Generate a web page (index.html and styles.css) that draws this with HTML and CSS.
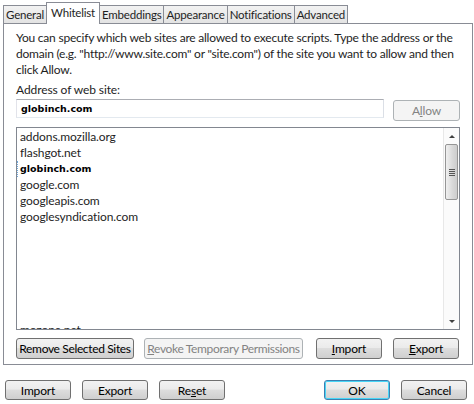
FILE: index.html
```html
<!DOCTYPE html>
<html lang="en">
<head>
  <meta charset="UTF-8">
  <title>Options - Whitelist</title>
  <link rel="stylesheet" href="styles.css">
</head>
<body>

  <div class="tabs">
    <div class="tab first">General</div>
    <div class="tab active">Whitelist</div>
    <div class="tab">Embeddings</div>
    <div class="tab">Appearance</div>
    <div class="tab">Notifications</div>
    <div class="tab">Advanced</div>
  </div>

  <div class="panel">
    <p class="intro">You can specify which web sites are allowed to execute scripts. Type the address or the domain (e.g. "http://www.site.com" or "site.com") of the site you want to allow and then click Allow.</p>

    <div class="label">Address of web site:</div>
    <div class="address-row">
      <div class="address">globinch.com</div>
      <button class="btn allow" disabled>A<u>l</u>low</button>
    </div>

    <!-- site list -->
    <div class="sites">
      <div class="site-items">
        <div class="site">addons.mozilla.org</div>
        <div class="site">flashgot.net</div>
        <div class="site odd-font">globinch.com</div>
        <div class="site">google.com</div>
        <div class="site">googleapis.com</div>
        <div class="site">googlesyndication.com</div>
        <div class="gap"></div>
        <div class="site">mozone.net</div>
      </div>
      <div class="scrollbar">
        <div class="arrow up"></div>
        <div class="track">
          <div class="thumb"><span class="grip"></span></div>
        </div>
        <div class="arrow down"></div>
      </div>
    </div>

    <div class="list-actions">
      <button class="btn remove">Remove Selected Sites</button>
      <button class="btn revoke" disabled><u>R</u>evoke Temporary Permissions</button>
      <button class="btn small"><u>I</u>mport</button>
      <button class="btn small"><u>E</u>xport</button>
    </div>
  </div>

  <div class="dialog-actions">
    <button class="btn small">Import</button>
    <button class="btn small">Export</button>
    <button class="btn small">Re<u>s</u>et</button>
    <span class="spacer"></span>
    <button class="btn small default">OK</button>
    <button class="btn small">Cancel</button>
  </div>

</body>
</html>
```

FILE: styles.css
```css
body {
  margin: 0;
  width: 474px;
  height: 404px;
  background: white;
  font-family: Lato, sans-serif;
  font-size: 12px;
  letter-spacing: -0.1px;
  color: #1e1e1e;
  overflow: hidden;
}
.tabs {
  display: flex;
  align-items: flex-end;
  height: 23px;
  margin-left: 3px;
  position: relative;
  z-index: 1;
  font-size: 11.5px;
  letter-spacing: -0.2px;
}
.tab {
  height: 18px;
  line-height: 17px;
  padding: 0 2px;
  border: 1px solid #898c95;
  border-left: none;
  border-bottom: none;
  background: linear-gradient(#f2f2f2, #e3e3e3);
  box-sizing: border-box;
}
.tab.first {
  border-left: 1px solid #898c95;
}
.tab.active {
  height: 22px;
  line-height: 19px;
  background: white;
  border-left: 1px solid #898c95;
  margin-left: -1px;
  margin-bottom: -1px;
  padding: 0 4px;
}
.panel {
  margin: 0 1px 0 3px;
  border: 1px solid #898c95;
  padding: 6px 12px 5px 12px;
  height: 342px;
  box-sizing: border-box;
}
.intro {
  margin: 0 -4px 0 0;
  line-height: 16px;
  letter-spacing: -0.22px;
}
.label {
  margin-top: 4px;
  line-height: 16px;
}
.address-row {
  display: flex;
  gap: 9px;
  margin-top: 1px;
}
.address {
  flex: 1;
  height: 19px;
  border-top: 1px solid #abadb3;
  border-left: 1px solid #e2e3ea;
  border-right: 1px solid #dbdfe6;
  border-bottom: 1px solid #e3e9ef;
  box-sizing: border-box;
  padding: 2px 4px;
  font-family: "DejaVu Sans", sans-serif;
  font-weight: bold;
  font-size: 9.5px;
  letter-spacing: 0;
  line-height: 14px;
  color: #000;
}
.btn {
  height: 21px;
  width: 66px;
  padding: 0;
  border: 1px solid #707070;
  border-radius: 3px;
  background: linear-gradient(#f2f2f2 0%, #ebebeb 45%, #dddddd 50%, #cfcfcf 100%);
  font-family: Lato, sans-serif;
  font-size: 12px;
  letter-spacing: -0.15px;
  color: #000;
  box-sizing: border-box;
  line-height: 17px;
  white-space: nowrap;
}
.btn u {
  text-decoration: underline;
}
.btn[disabled] {
  background: #f4f4f4;
  border-color: #adb2b5;
  color: #838383;
}
.allow {
  width: 67px;
  margin-top: 1px;
}
.sites {
  display: flex;
  margin-top: 6px;
  height: 203px;
  border: 1px solid #828790;
  box-sizing: border-box;
  overflow: hidden;
}
.site-items {
  flex: 1;
  padding: 1px 3px;
  overflow: hidden;
}
.site {
  height: 16px;
  line-height: 16px;
}
.odd-font {
  font-family: "DejaVu Sans", sans-serif;
  font-weight: bold;
  font-size: 9.5px;
  letter-spacing: 0;
  color: #000;
  border-left: 1px dotted #6fa8dc;
  margin-left: -3px;
  padding-left: 2px;
}
.gap {
  height: 97px;
}
.scrollbar {
  width: 15px;
  display: flex;
  flex-direction: column;
  border-left: 1px solid #e8e8e8;
  background: #fbfbfb;
}
.arrow {
  height: 16px;
  display: flex;
  align-items: center;
  justify-content: center;
}
.arrow::after {
  content: "";
  border-left: 3px solid transparent;
  border-right: 3px solid transparent;
}
.arrow.up::after {
  border-bottom: 3px solid #404040;
}
.arrow.down::after {
  border-top: 3px solid #404040;
}
.track {
  flex: 1;
}
.thumb {
  margin: 0 1px;
  height: 54px;
  border: 1px solid #959595;
  border-radius: 2px;
  background: linear-gradient(90deg, #f0f0f0, #d8d8d8 60%, #cdcdcd);
  display: flex;
  align-items: center;
  justify-content: center;
}
.grip {
  width: 6px;
  height: 7px;
  background: repeating-linear-gradient(#555 0 1px, transparent 1px 2px);
}
.list-actions {
  display: flex;
  margin-top: 8px;
}
.remove {
  width: 118px;
  letter-spacing: -0.35px;
}
.revoke {
  width: 159px;
  margin-left: 10px;
  letter-spacing: -0.35px;
}
.list-actions .small {
  margin-left: 13px;
}
.list-actions .small + .small {
  margin-left: 11px;
}
.dialog-actions {
  display: flex;
  padding: 15px 7px 0 5px;
  gap: 11px;
}
.dialog-actions .btn {
  height: 20px;
}
.spacer {
  flex: 1;
}
.default {
  border-color: #3c7fb1;
  box-shadow: inset 0 0 0 1px #48d5f6;
}
```
